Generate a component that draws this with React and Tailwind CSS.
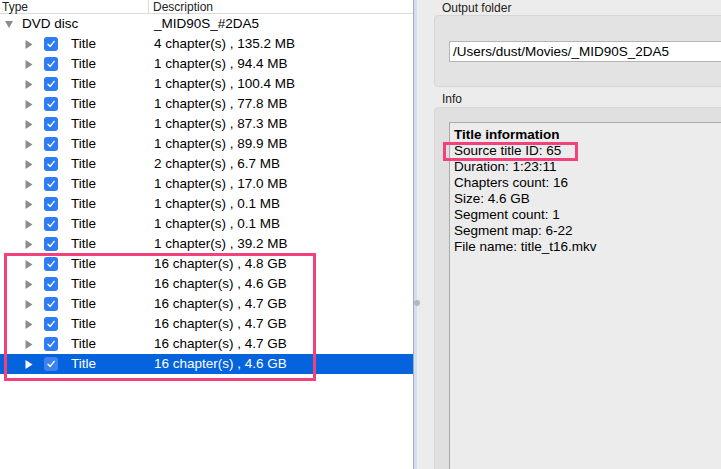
import React from 'react';

const titles = [
    '4 chapter(s) , 135.2 MB',
    '1 chapter(s) , 94.4 MB',
    '1 chapter(s) , 100.4 MB',
    '1 chapter(s) , 77.8 MB',
    '1 chapter(s) , 87.3 MB',
    '1 chapter(s) , 89.9 MB',
    '2 chapter(s) , 6.7 MB',
    '1 chapter(s) , 17.0 MB',
    '1 chapter(s) , 0.1 MB',
    '1 chapter(s) , 0.1 MB',
    '1 chapter(s) , 39.2 MB',
    '16 chapter(s) , 4.8 GB',
    '16 chapter(s) , 4.6 GB',
    '16 chapter(s) , 4.7 GB',
    '16 chapter(s) , 4.7 GB',
    '16 chapter(s) , 4.7 GB',
    '16 chapter(s) , 4.6 GB',
];

const info = [
    'Source title ID: 65',
    'Duration: 1:23:11',
    'Chapters count: 16',
    'Size: 4.6 GB',
    'Segment count: 1',
    'Segment map: 6-22',
    'File name: title_t16.mkv',
];

const Check = ({ selected }) => (
    <div className={`w-[14px] h-[14px] rounded-[3px] flex items-center justify-center ${selected ? 'bg-[#3d82ef]' : 'bg-[#2f7bf5]'}`}>
        <svg width="10" height="10" viewBox="0 0 10 10">
            <path d="M2 5.2 L4.2 7.4 L8.2 2.4" fill="none" stroke="white" strokeWidth="1.4" strokeLinecap="round" strokeLinejoin="round" />
        </svg>
    </div>
);

const Arrow = ({ down, selected }) => (
    <svg width="8" height="9" viewBox="0 0 8 9">
        {down
            ? <path d="M0 1 L8 1 L4 8 Z" fill="#8c8c8c" />
            : <path d="M0.5 0 L7.5 4.5 L0.5 9 Z" fill={selected ? '#ffffff' : '#8c8c8c'} />}
    </svg>
);

const App = () => {
    return (
        <div className="relative w-[721px] h-[469px] flex overflow-hidden bg-white text-black" style={{ fontFamily: '"Liberation Sans", Arial, sans-serif' }}>
            {/* Tree */}
            <div className="w-[413px] h-full bg-white flex flex-col">
                <div className="h-[14px] flex border-b border-[#dcdcdc] text-[12px] leading-[14px] text-[#222]">
                    <div className="w-[149px] pl-[2px] border-r border-[#dcdcdc]">Type</div>
                    <div className="pl-[4px]">Description</div>
                </div>
                <div className="flex flex-col text-[13.5px]">
                    <div className="h-[20px] flex items-center">
                        <div className="w-[150px] flex items-center">
                            <div className="pl-[5px] w-[22px]"><Arrow down /></div>
                            <span>DVD disc</span>
                        </div>
                        <div className="pl-[4px]">_MID90S_#2DA5</div>
                    </div>
                    {titles.map((d, i) => {
                        const selected = i === titles.length - 1;
                        return (
                            <div key={i} className={`h-[20px] flex items-center ${selected ? 'bg-[#0463dd] text-white' : ''}`}>
                                <div className="w-[150px] flex items-center">
                                    <div className="pl-[25px] w-[44px] flex"><Arrow selected={selected} /></div>
                                    <Check selected={selected} />
                                    <span className="pl-[13px]">Title</span>
                                </div>
                                <div className="pl-[4px]">{d}</div>
                            </div>
                        );
                    })}
                </div>
            </div>

            {/* Splitter */}
            <div className="relative w-[4px] h-full flex">
                <div className="w-[1px] h-full bg-[#a4acba]" />
                <div className="w-[3px] h-full bg-[#d3deef]" />
                <div className="absolute left-[1px] top-[300px] w-[6px] h-[6px] rounded-full bg-[#b4b8bf]" />
            </div>

            {/* Right panel */}
            <div className="flex-1 h-full bg-[#ececec] overflow-hidden">
                <div className="w-[340px] pl-[17px] flex flex-col">
                    <div className="h-[15px] pl-[8px] pt-[1px] text-[12px] leading-[14px] text-[#222]">Output folder</div>
                    <div className="h-[72px] rounded-[4px] bg-[#e3e3e3] border border-[#d6d6d6] pl-[14px] pt-[25px]">
                        <div className="h-[21px] bg-white border border-[#b4b4b4] pl-[3px] text-[13.5px] leading-[19px]">/Users/dust/Movies/_MID90S_2DA5</div>
                    </div>
                    <div className="h-[20px] pl-[8px] pt-[5px] text-[12px] leading-[14px] text-[#222]">Info</div>
                    <div className="h-[400px] rounded-[4px] bg-[#e0e0e0] border border-[#d6d6d6] pl-[14px] pt-[14px]">
                        <div className="h-full bg-[#ececec] border-l border-t border-[#aaaaaa] pl-[4px] pt-[4px] text-[13.5px] leading-[16px]">
                            <div className="font-bold">Title information</div>
                            {info.map((l) => <div key={l}>{l}</div>)}
                        </div>
                    </div>
                </div>
            </div>

            {/* annotations */}
            <div className="absolute left-[4px] top-[253px] w-[312px] h-[128px] border-[3px] border-[#f2417b]" />
            <div className="absolute left-[443px] top-[142px] w-[135px] h-[19px] border-[3px] border-[#f2417b]" />
        </div>
    );
};

export default App;
